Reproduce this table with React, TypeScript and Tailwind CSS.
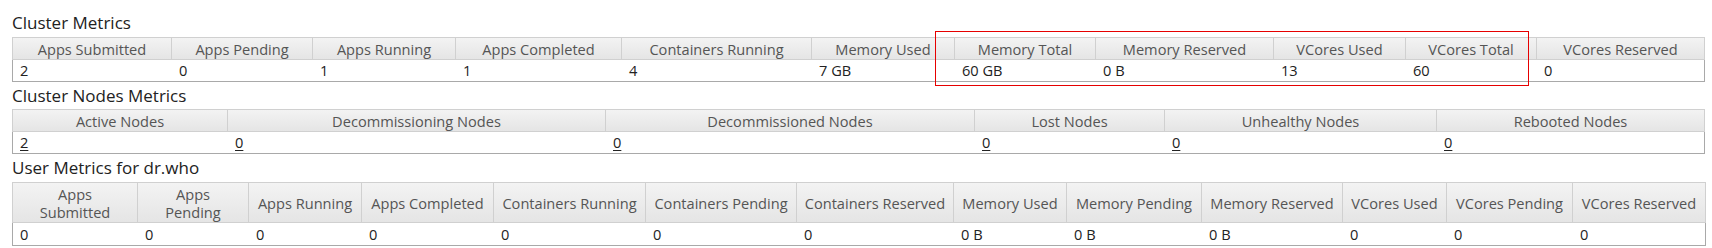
import React from "react";

type Col = { h: React.ReactNode; v: string };

const t1: Col[] = [
  { h: "Apps Submitted", v: "2" },
  { h: "Apps Pending", v: "0" },
  { h: "Apps Running", v: "1" },
  { h: "Apps Completed", v: "1" },
  { h: "Containers Running", v: "4" },
  { h: "Memory Used", v: "7 GB" },
  { h: "Memory Total", v: "60 GB" },
  { h: "Memory Reserved", v: "0 B" },
  { h: "VCores Used", v: "13" },
  { h: "VCores Total", v: "60" },
  { h: "VCores Reserved", v: "0" },
];

const t2: Col[] = [
  { h: "Active Nodes", v: "2" },
  { h: "Decommissioning Nodes", v: "0" },
  { h: "Decommissioned Nodes", v: "0" },
  { h: "Lost Nodes", v: "0" },
  { h: "Unhealthy Nodes", v: "0" },
  { h: "Rebooted Nodes", v: "0" },
];

const t3: Col[] = [
  { h: (<>Apps<br />Submitted</>), v: "0" },
  { h: (<>Apps<br />Pending</>), v: "0" },
  { h: "Apps Running", v: "0" },
  { h: "Apps Completed", v: "0" },
  { h: "Containers Running", v: "0" },
  { h: "Containers Pending", v: "0" },
  { h: "Containers Reserved", v: "0" },
  { h: "Memory Used", v: "0 B" },
  { h: "Memory Pending", v: "0 B" },
  { h: "Memory Reserved", v: "0 B" },
  { h: "VCores Used", v: "0" },
  { h: "VCores Pending", v: "0" },
  { h: "VCores Reserved", v: "0" },
];

function Table({
  cols,
  gridClass,
  headClass,
  dataClass,
  links,
}: {
  cols: Col[];
  gridClass: string;
  headClass: string;
  dataClass: string;
  links?: boolean;
}) {
  return (
    <div className={"grid w-[1693px] " + gridClass}>
      {cols.map((c, i) => (
        <div
          key={"h" + i}
          className={
            "flex items-center justify-center text-center leading-[18px] text-[#555] border-t border-b border-r border-[#d0d0d0] bg-linear-to-b from-[#f3f3f3] to-[#e5e5e5] " +
            headClass +
            (i === 0 ? " border-l" : "")
          }
        >
          <span>{c.h}</span>
        </div>
      ))}
      {cols.map((c, i) => (
        <div
          key={"d" + i}
          className={
            "pl-[7px] text-[#222] border-b border-[#a9a9a9] " +
            dataClass +
            (i === 0 ? " border-l" : "") +
            (i === cols.length - 1 ? " border-r" : "")
          }
        >
          {links ? <a className="underline underline-offset-2 text-[#222]">{c.v}</a> : c.v}
        </div>
      ))}
    </div>
  );
}

function Title({ children, h }: { children: React.ReactNode; h: string }) {
  return <div className={"text-[17px] text-[#222] " + h}>{children}</div>;
}

export default function App() {
  return (
    <div className="relative w-[1712px] h-[248px] bg-white pt-[9px] pl-[12px] font-['Open_Sans',sans-serif] text-[14.6px]">
      <Title h="h-[28px] leading-[28px]">Cluster Metrics</Title>
      <Table
        cols={t1}
        gridClass="grid-cols-[160px_141px_143px_166px_190px_143px_141px_178px_132px_131px_168px]"
        headClass="h-[23px]"
        dataClass="h-[22px] leading-[21px]"
      />
      <Title h="h-[27px] leading-[27px]">Cluster Nodes Metrics</Title>
      <Table
        cols={t2}
        gridClass="grid-cols-[216px_378px_369px_190px_272px_268px]"
        headClass="h-[23px]"
        dataClass="h-[22px] leading-[21px]"
        links
      />
      <Title h="h-[28px] leading-[28px]">User Metrics for dr.who</Title>
      <Table
        cols={t3}
        gridClass="grid-cols-[126px_111px_113px_132px_152px_151px_157px_113px_135px_141px_104px_126px_133px]"
        headClass="h-[41px]"
        dataClass="h-[23px] leading-[22px]"
      />
      <div className="absolute left-[935px] top-[31px] w-[594px] h-[55px] border border-[#e60000]" />
    </div>
  );
}
